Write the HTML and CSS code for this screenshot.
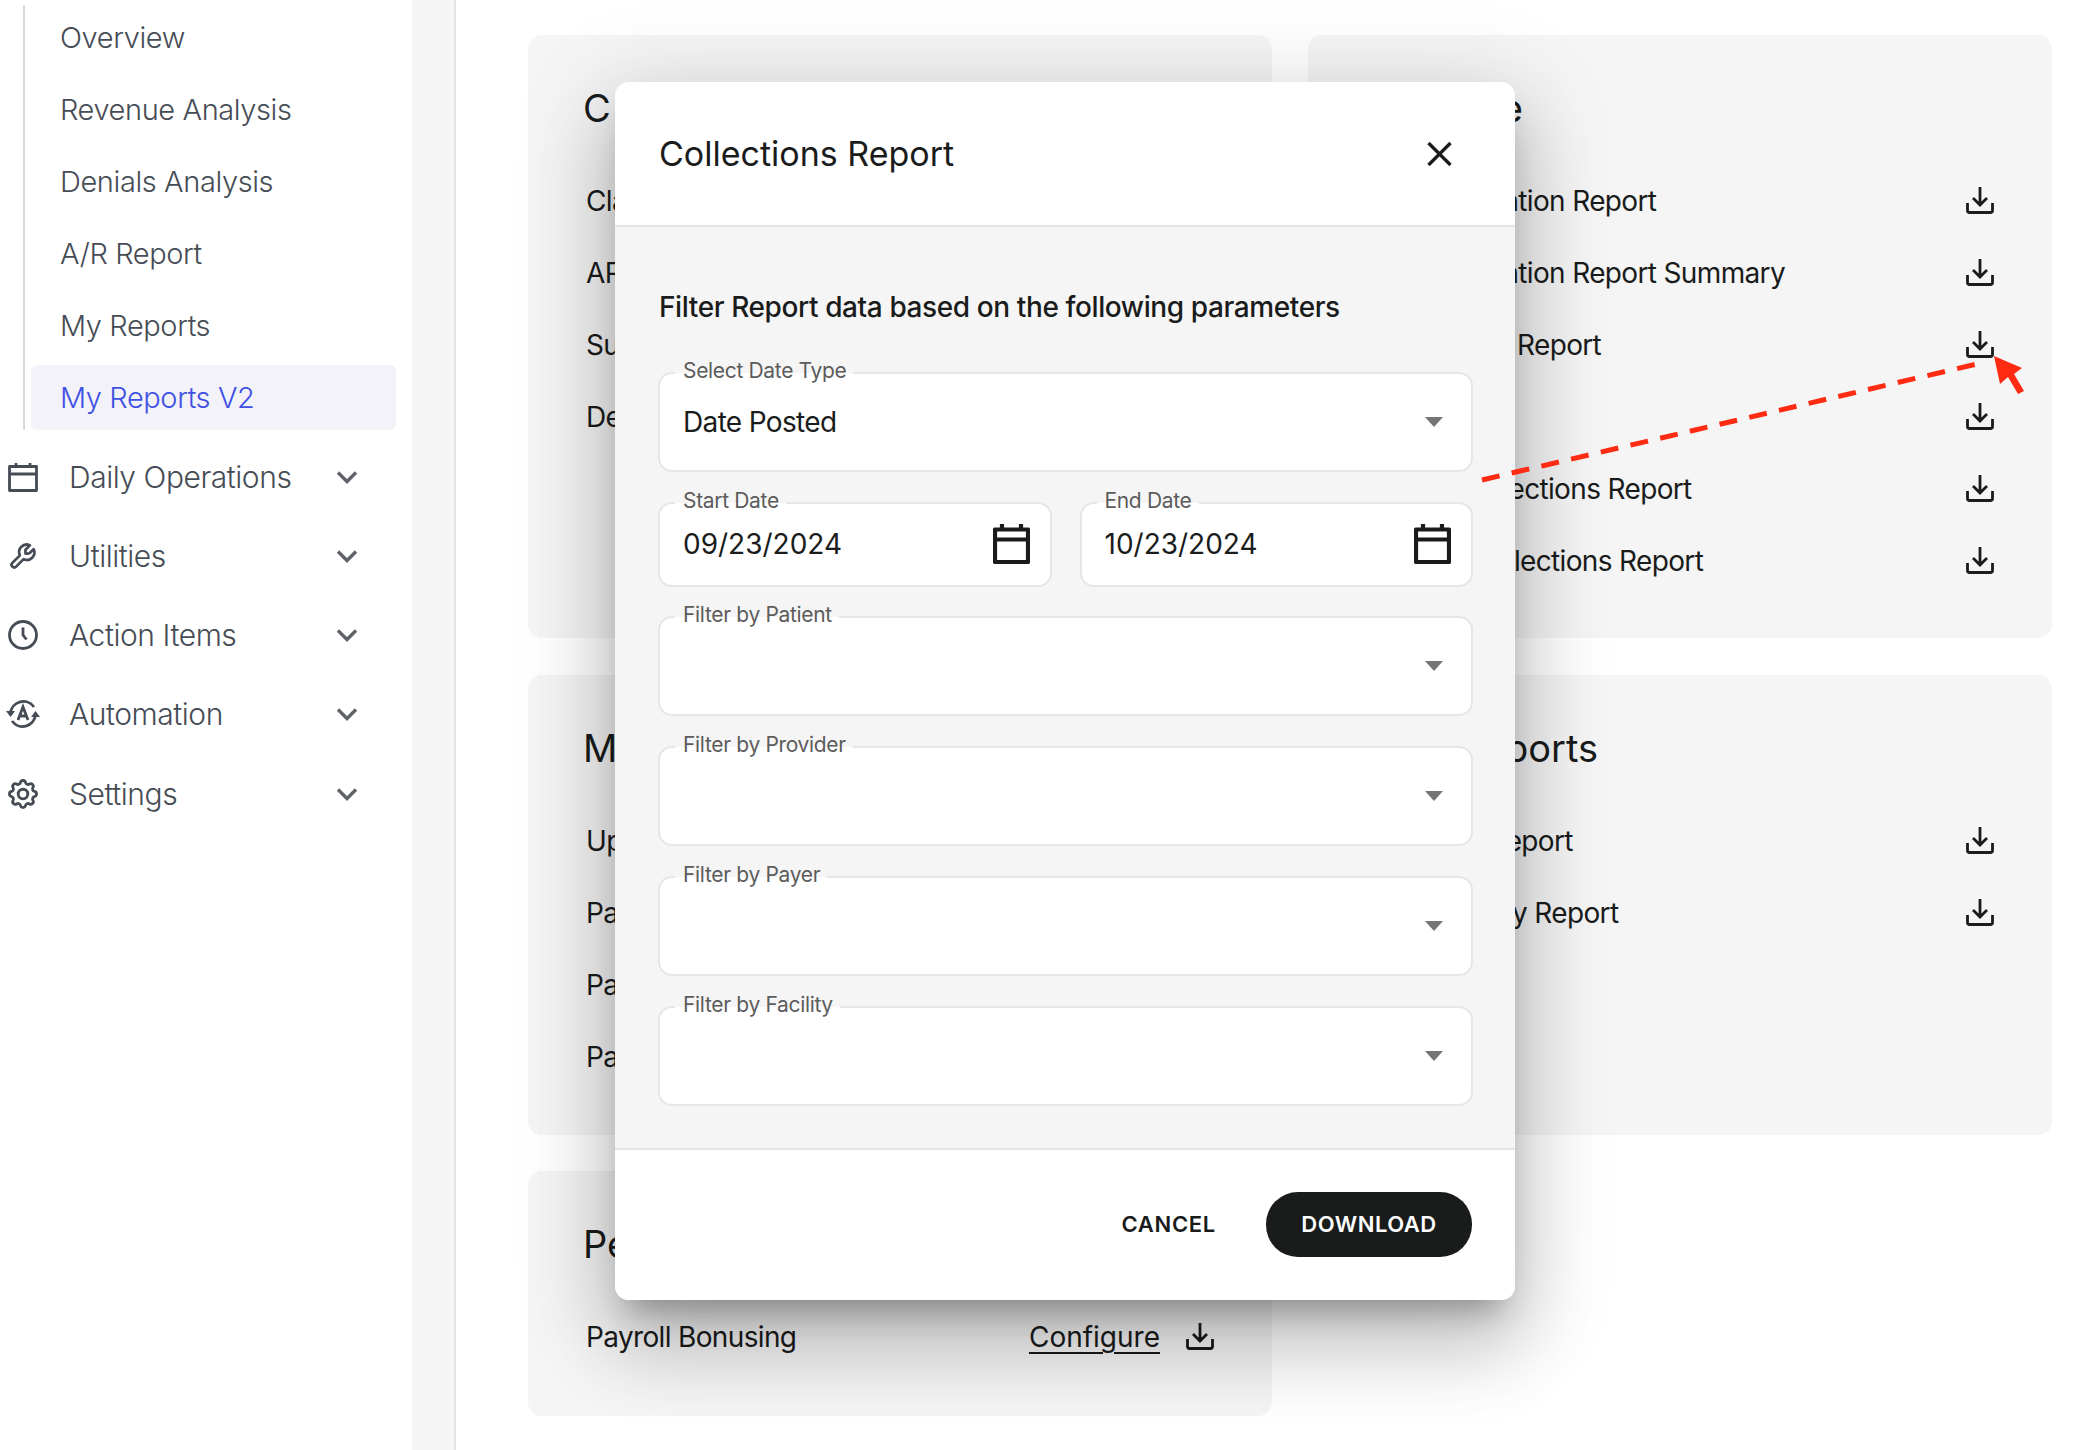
FILE: index.html
```html
<!DOCTYPE html>
<html lang="en">
<head>
<meta charset="utf-8">
<title>Collections Report</title>
<link rel="stylesheet" href="styles.css">
</head>
<body>
<svg class="sprite" width="0" height="0" aria-hidden="true">
  <symbol id="dl" viewBox="0 0 28 27"><path d="M14 0v18M7 11l7 7 7-7M1.500 16v7.500a2 2 0 0 0 2 2h21a2 2 0 0 0 2-2V16" fill="none" stroke="currentColor" stroke-width="2.800"/></symbol>
  <symbol id="chev" viewBox="0 0 22 14"><path d="M2 2.500l9 9 9-9" fill="none" stroke="currentColor" stroke-width="3.400"/></symbol>
  <symbol id="cal" viewBox="0 0 37 40"><path d="M9 0v6M28 0v6M2 5.500h33v32.500h-33zM2 15.500h33" fill="none" stroke="currentColor" stroke-width="4.200" stroke-linejoin="round"/></symbol>
  <symbol id="caret" viewBox="0 0 18 10"><path d="M0 0h18l-9 10z" fill="currentColor"/></symbol>
</svg>
<div class="app">
  <aside class="sidebar">
    <ul class="submenu">
      <li class="subitem">Overview</li>
      <li class="subitem">Revenue Analysis</li>
      <li class="subitem">Denials Analysis</li>
      <li class="subitem">A/R Report</li>
      <li class="subitem">My Reports</li>
      <li class="subitem active">My Reports V2</li>
    </ul>
    <ul class="groups">
      <li class="group">
        <svg class="gicon" viewBox="0 0 30 30"><path d="M8 1v4M22 1v4M1.500 4.500h27v24h-27zM1.500 12h27" fill="none" stroke="currentColor" stroke-width="2.800" stroke-linejoin="round"/></svg>
        <span class="glabel">Daily Operations</span>
        <svg class="gchev"><use href="#chev"/></svg>
      </li>
      <li class="group">
        <svg class="gicon" viewBox="0 0 24 24"><g transform="translate(24 0) scale(-1 1)"><path d="M7 10h3v-3l-3.500-3.500a6 6 0 0 1 8 8l6 6a2 2 0 0 1-3 3l-6-6a6 6 0 0 1-8-8l3.500 3.500" fill="none" stroke="currentColor" stroke-width="2.200" stroke-linejoin="round"/></g></svg>
        <span class="glabel">Utilities</span>
        <svg class="gchev"><use href="#chev"/></svg>
      </li>
      <li class="group">
        <svg class="gicon" viewBox="0 0 30 30"><circle cx="15" cy="15" r="13.500" fill="none" stroke="currentColor" stroke-width="2.800"/><path d="M15 7.500v7.500l3.500 4.500" fill="none" stroke="currentColor" stroke-width="2.800"/></svg>
        <span class="glabel">Action Items</span>
        <svg class="gchev"><use href="#chev"/></svg>
      </li>
      <li class="group">
        <svg class="gicon wide" viewBox="0 0 34 30"><path d="M4.500 14a13 13 0 0 1 23.500-6M29.500 16a13 13 0 0 1-23.500 6" fill="none" stroke="currentColor" stroke-width="2.800"/><path d="M0 12h9l-4.500 6zM25 18h9l-4.500-6z" fill="currentColor"/><path d="M12 21l5-13 5 13M13.500 17h7" fill="none" stroke="currentColor" stroke-width="2.800"/></svg>
        <span class="glabel">Automation</span>
        <svg class="gchev"><use href="#chev"/></svg>
      </li>
      <li class="group">
        <svg class="gicon" viewBox="2 2 20 20"><path d="M10.325 4.317c.426-1.756 2.924-1.756 3.350 0a1.724 1.724 0 0 0 2.573 1.066c1.543-.94 3.310.826 2.370 2.370a1.724 1.724 0 0 0 1.065 2.572c1.756.426 1.756 2.924 0 3.350a1.724 1.724 0 0 0-1.066 2.573c.94 1.543-.826 3.310-2.370 2.370a1.724 1.724 0 0 0-2.572 1.065c-.426 1.756-2.924 1.756-3.350 0a1.724 1.724 0 0 0-2.573-1.066c-1.543.94-3.310-.826-2.370-2.370a1.724 1.724 0 0 0-1.065-2.572c-1.756-.426-1.756-2.924 0-3.350a1.724 1.724 0 0 0 1.066-2.573c-.94-1.543.826-3.310 2.370-2.370 1 .608 2.296.07 2.572-1.065z" fill="none" stroke="currentColor" stroke-width="1.900"/><circle cx="12" cy="12" r="3.200" fill="none" stroke="currentColor" stroke-width="1.900"/></svg>
        <span class="glabel">Settings</span>
        <svg class="gchev"><use href="#chev"/></svg>
      </li>
    </ul>
  </aside>
  <div class="rail"></div>
  <main class="main">
    <section class="card">
      <h2 class="card-title spaced">Claims</h2>
      <div class="row"><span>Claims Report</span><svg class="dl"><use href="#dl"/></svg></div>
      <div class="row"><span>AR Aging Report</span><svg class="dl"><use href="#dl"/></svg></div>
      <div class="row"><span>Submission Report</span><svg class="dl"><use href="#dl"/></svg></div>
      <div class="row"><span>Denials Report</span><svg class="dl"><use href="#dl"/></svg></div>
    </section>
    <section class="card">
      <h2 class="card-title loose">Revenue</h2>
      <div class="row"><span>Communication Report</span><svg class="dl"><use href="#dl"/></svg></div>
      <div class="row"><span>Communication Report Summary</span><svg class="dl"><use href="#dl"/></svg></div>
      <div class="row"><span>Deductions Report</span><svg class="dl"><use href="#dl"/></svg></div>
      <div class="row"><span>Deposits</span><svg class="dl"><use href="#dl"/></svg></div>
      <div class="row"><span>Patient Collections Report</span><svg class="dl"><use href="#dl"/></svg></div>
      <div class="row"><span>Referral Collections Report</span><svg class="dl"><use href="#dl"/></svg></div>
    </section>
    <section class="card">
      <h2 class="card-title">Management</h2>
      <div class="row"><span>Uploads Report</span><svg class="dl"><use href="#dl"/></svg></div>
      <div class="row"><span>Patients Report</span><svg class="dl"><use href="#dl"/></svg></div>
      <div class="row"><span>Payers Report</span><svg class="dl"><use href="#dl"/></svg></div>
      <div class="row"><span>Payments Report</span><svg class="dl"><use href="#dl"/></svg></div>
    </section>
    <section class="card">
      <h2 class="card-title">Misc Reports</h2>
      <div class="row"><span>Analytics Report</span><svg class="dl"><use href="#dl"/></svg></div>
      <div class="row"><span>User Activity Report</span><svg class="dl"><use href="#dl"/></svg></div>
    </section>
    <section class="card">
      <h2 class="card-title">Performance</h2>
      <div class="row"><span>Payroll Bonusing</span><span class="row-actions"><a class="link">Configure</a><svg class="dl"><use href="#dl"/></svg></span></div>
    </section>
  </main>
</div>

<div class="modal">
  <header class="modal-head">
    <h1 class="modal-title">Collections Report</h1>
    <svg class="close" viewBox="0 0 25 24"><path d="M1.500 1l22 22M23.500 1l-22 22" fill="none" stroke="currentColor" stroke-width="3.400"/></svg>
  </header>
  <div class="modal-body">
    <p class="lead">Filter Report data based on the following parameters</p>
    <div class="fields">
      <div class="field select"><span class="label">Select Date Type</span><span class="value">Date Posted</span><svg class="caret"><use href="#caret"/></svg></div>
      <div class="dates">
        <div class="field date"><span class="label">Start Date</span><span class="value digits">09/23/2024</span><svg class="cal"><use href="#cal"/></svg></div>
        <div class="field date"><span class="label">End Date</span><span class="value digits">10/23/2024</span><svg class="cal"><use href="#cal"/></svg></div>
      </div>
      <div class="field select"><span class="label">Filter by Patient</span><svg class="caret"><use href="#caret"/></svg></div>
      <div class="field select"><span class="label">Filter by Provider</span><svg class="caret"><use href="#caret"/></svg></div>
      <div class="field select"><span class="label">Filter by Payer</span><svg class="caret"><use href="#caret"/></svg></div>
      <div class="field select"><span class="label">Filter by Facility</span><svg class="caret"><use href="#caret"/></svg></div>
    </div>
  </div>
  <footer class="modal-foot">
    <button class="btn-text">CANCEL</button>
    <button class="btn-primary">DOWNLOAD</button>
  </footer>
</div>

<svg class="annotation" viewBox="0 0 2084 1450" aria-hidden="true">
  <path d="M1482 480L1981 363" fill="none" stroke="#ff2a12" stroke-width="5" stroke-dasharray="18 12.500"/>
  <path d="M1994 356l28 12-8 6 10 17-6 3-10-17-8 7z" fill="#ff2a12"/>
</svg>
</body>
</html>
```
FILE: styles.css
```css
* { box-sizing: border-box; }
html, body { margin: 0; padding: 0; }
body {
  width: 2084px;
  height: 1450px;
  overflow: hidden;
  position: relative;
  background: #fff;
  font-family: "Inter", "Liberation Sans", sans-serif;
  color: #1a1c1c;
}
.sprite { position: absolute; }
ul { list-style: none; margin: 0; padding: 0; }
.app { display: flex; height: 1450px; }

.sidebar { width: 412px; flex: none; background: #fff; color: #464c55; font-size: 29px; letter-spacing: -0.4px; font-weight: 300; }
.rail { width: 44px; flex: none; background: #f5f5f5; border-right: 2px solid #e4e4e4; }
.submenu {
  margin: 5px 0 0 23px;
  border-left: 2px solid #d9d9d9;
  display: flex;
  flex-direction: column;
  gap: 7px;
}
.subitem {
  height: 65px;
  margin: 0 16px 0 6px;
  padding-left: 29px;
  display: flex;
  align-items: center;
  border-radius: 6px;
}
.subitem.active { background: #f2f2f8; color: #3f50e4; }
.groups { padding-top: 7px; }
.group { height: 79.25px; display: flex; align-items: center; padding-left: 8px; }
.gicon { width: 30px; height: 30px; flex: none; }
.gicon.wide { width: 34px; margin-left: -2px; margin-right: -2px; }
.glabel { margin-left: 31px; flex: 1; font-size: 30px; letter-spacing: -0.45px; }
.gchev { width: 22px; height: 14px; margin-right: 54px; color: #5f6369; }

.main {
  flex: 1;
  padding: 35px 32px 0 72px;
  display: grid;
  grid-template-columns: 744px 744px;
  grid-template-rows: 603px 460px 245px;
  column-gap: 36px;
  row-gap: 36.500px;
}
.card { background: #f5f5f5; border-radius: 14px; padding: 45px 58px 0 58px; }
.card-title { margin: 0 0 29px -3px; font-size: 38px; line-height: 56px; font-weight: 400; }
.card-title.loose { letter-spacing: 0.8px; }
.card-title.spaced { letter-spacing: 4px; }
.row { height: 72px; display: flex; align-items: center; justify-content: space-between; font-size: 28px; letter-spacing: -0.65px; }
.row-actions { display: flex; align-items: center; gap: 26px; }
.link { letter-spacing: 0; text-decoration: underline; text-underline-offset: 5px; text-decoration-thickness: 2px; }
.dl { width: 28px; height: 27px; flex: none; margin-bottom: 1px; }

.modal {
  position: absolute;
  left: 615px;
  top: 82px;
  width: 900px;
  height: 1218px;
  background: #fff;
  border-radius: 14px;
  display: flex;
  flex-direction: column;
  box-shadow: 0 22px 30px -14px rgba(0,0,0,.3), 0 48px 76px 6px rgba(0,0,0,.15), 0 18px 92px 16px rgba(0,0,0,.13);
}
.modal-head {
  height: 145px;
  flex: none;
  border-bottom: 2px solid #e4e4e4;
  padding: 0 63px 0 44px;
  display: flex;
  align-items: center;
  justify-content: space-between;
  border-radius: 14px 14px 0 0;
}
.modal-title { margin: 0; font-size: 34px; font-weight: 400; }
.close { width: 25px; height: 24px; }
.modal-body {
  flex: none;
  height: 921px;
  background: #f5f5f5;
  padding: 0 42px 0 43px;
}
.lead { margin: 0 0 0 1px; padding-top: 60px; height: 145px; line-height: 40px; font-size: 28px; font-weight: 500; letter-spacing: -0.4px; }
.fields { display: flex; flex-direction: column; gap: 30px; }
.field {
  position: relative;
  background: #fff;
  border: 2px solid #e6e6e6;
  border-radius: 14px;
  height: 100px;
  display: flex;
  align-items: center;
  padding: 0 23px 0 23px;
}
.label {
  position: absolute;
  left: 15px;
  top: -16px;
  padding: 0 7px 0 8px;
  font-size: 21px;
  line-height: 26px;
  letter-spacing: -0.33px;
  color: #5c5c5c;
  background: linear-gradient(#f5f5f5 15px, #fff 15px);
}
.value { font-size: 28px; letter-spacing: -0.65px; flex: 1; }
.value.digits { letter-spacing: 0; }
.caret { width: 18px; height: 10px; margin-left: auto; color: #757575; margin-right: 5px; }
.dates { display: flex; gap: 28px; margin-bottom: -1px; }
.field.date { flex: 1; height: 85px; padding-right: 20px; padding-bottom: 2px; }
.cal { width: 37px; height: 40px; flex: none; }
.modal-foot {
  flex: 1;
  display: flex;
  align-items: center;
  justify-content: flex-end;
  gap: 50px;
  padding: 0 43px 2px 0;
  border-top: 2px solid #e4e4e4;
  border-radius: 0 0 14px 14px;
  background: #fff;
}
button { font-family: inherit; border: 0; background: none; cursor: pointer; font-size: 22px; font-weight: 600; padding: 0; }
.btn-text { color: #1a1c1c; letter-spacing: 0.7px; }
.btn-primary { width: 206px; height: 65px; border-radius: 32px; background: #1a1c1c; color: #fff; letter-spacing: 0.5px; }

.annotation { position: absolute; left: 0; top: 0; width: 2084px; height: 1450px; pointer-events: none; }
```
